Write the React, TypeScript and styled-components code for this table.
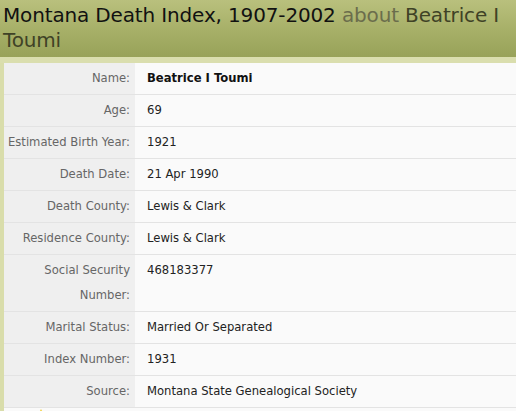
import styled, { createGlobalStyle } from "styled-components";

const GlobalStyle = createGlobalStyle`
  html, body {
    margin: 0;
    padding: 0;
    background: #fafafa;
  }
  body {
    font-family: "DejaVu Sans", Verdana, sans-serif;
    overflow: hidden;
  }
`;

interface Field {
  label: string;
  value: string;
  strong?: boolean;
}

const fields: Field[] = [
  { label: "Name:", value: "Beatrice I Toumi", strong: true },
  { label: "Age:", value: "69" },
  { label: "Estimated Birth Year:", value: "1921" },
  { label: "Death Date:", value: "21 Apr 1990" },
  { label: "Death County:", value: "Lewis & Clark" },
  { label: "Residence County:", value: "Lewis & Clark" },
  { label: "Social Security Number:", value: "468183377" },
  { label: "Marital Status:", value: "Married Or Separated" },
  { label: "Index Number:", value: "1931" },
  { label: "Source:", value: "Montana State Genealogical Society" },
];

const Page = styled.div`
  width: 516px;
  height: 411px;
  display: flex;
  flex-direction: column;
  background: #d9ddab;
`;

const Header = styled.div`
  padding: 3px 4px 4px 3px;
  background: linear-gradient(to bottom, #b9c07d 0%, #a6af67 55%, #98a259 100%);
  border-bottom: 6px solid #dadeae;
`;

const Title = styled.h1`
  margin: 0;
  font-family: "DejaVu Sans", Verdana, sans-serif;
  font-weight: normal;
  font-size: 20px;
  line-height: 25px;
  letter-spacing: -0.15px;
  color: #111;
`;

const About = styled.span`
  color: #6b6d4c;
`;

const Who = styled.span`
  color: #3f4226;
`;

const Body = styled.div`
  flex: 1;
  margin-left: 4px;
  background: #fafafa;
`;

const Table = styled.div`
  display: grid;
  grid-template-columns: 131px 1fr;
`;

const Row = styled.div`
  display: contents;
`;

const Label = styled.div`
  background: #efefef;
  border-bottom: 1px solid #e3e3e3;
  padding: 3px 5px 3px 2px;
  text-align: right;
  font-size: 11.6px;
  line-height: 25px;
  color: #666;
`;

const Value = styled.div<{ $strong?: boolean }>`
  background: #fafafa;
  border-bottom: 1px solid #e3e3e3;
  padding: 3px 6px 3px 12px;
  font-size: 11.6px;
  line-height: 25px;
  color: ${(p) => (p.$strong ? "#111" : "#222")};
  font-weight: ${(p) => (p.$strong ? "bold" : "normal")};
`;

const Footer = styled.div`
  padding-left: 32px;
  height: 6px;
  overflow: hidden;
`;

const Tip = styled.svg`
  display: block;
`;

const App = () => {
  return (
    <Page>
      <GlobalStyle />
      <Header>
        <Title>
          Montana Death Index, 1907-2002 <About>about</About>{" "}
          <Who>Beatrice I Toumi</Who>
        </Title>
      </Header>
      <Body>
        <Table>
          {fields.map((f) => (
            <Row key={f.label}>
              <Label>{f.label}</Label>
              <Value $strong={f.strong}>{f.value}</Value>
            </Row>
          ))}
        </Table>
        <Footer>
          <Tip width="10" height="8" viewBox="0 0 10 8">
            <path d="M5 1 L9 8 L1 8 Z" fill="#f2d24a" />
          </Tip>
        </Footer>
      </Body>
    </Page>
  );
};

export default App;
